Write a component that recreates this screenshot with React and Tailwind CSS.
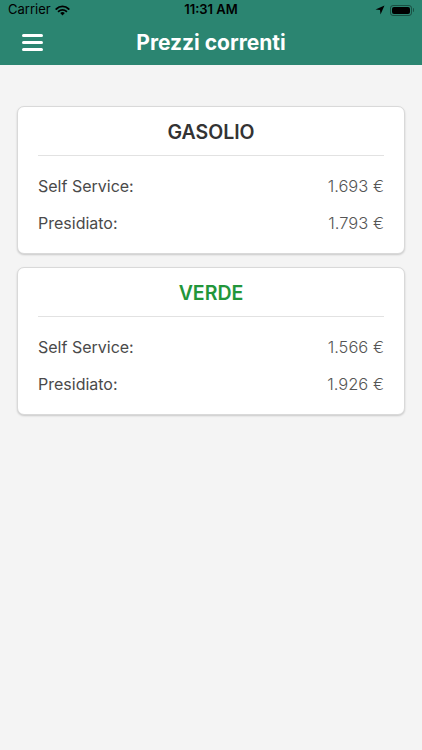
import React from "react";

const fuels = [
  { name: "GASOLIO", color: "text-[#333333]", self: "1.693 €", staff: "1.793 €" },
  { name: "VERDE", color: "text-[#22963a]", self: "1.566 €", staff: "1.926 €" },
];

function StatusBar() {
  return (
    <div className="relative flex h-5 items-center px-2 text-[13px] text-black">
      <div className="flex items-center gap-1">
        <span>Carrier</span>
        <svg width="15" height="11" viewBox="0 0 15 11">
          <path d="M7.5 10.5 L5.2 8 A3.3 3.3 0 0 1 9.8 8 Z" fill="#000" />
          <path d="M3.6 6.4 A5.6 5.6 0 0 1 11.4 6.4" stroke="#000" strokeWidth="1.8" fill="none" strokeLinecap="round" />
          <path d="M1.3 4 A8.8 8.8 0 0 1 13.7 4" stroke="#000" strokeWidth="1.8" fill="none" strokeLinecap="round" />
        </svg>
      </div>
      <span className="absolute left-1/2 -translate-x-1/2 font-semibold">11:31 AM</span>
      <div className="ml-auto flex items-center gap-[5px]">
        <svg width="10" height="10" viewBox="0 0 10 10">
          <path d="M9.5 0.5 L0.5 4.5 L5 5 L5.5 9.5 Z" fill="#000" />
        </svg>
        <div className="flex items-center">
          <div className="h-[11px] w-[22px] rounded-[3px] border border-black/40 p-[1px]">
            <div className="h-full w-full rounded-[2px] bg-black" />
          </div>
          <div className="ml-[1px] h-[4px] w-[1.5px] rounded-r bg-black/40" />
        </div>
      </div>
    </div>
  );
}

function PriceCard({ fuel }) {
  return (
    <div className="mx-[17px] rounded-[7px] border border-[#d9d9d9] bg-white px-5 pb-[18px] pt-[13px] shadow-[0_1px_2px_rgba(0,0,0,0.18)]">
      <h2 className={`text-center text-[19.5px] font-semibold leading-6 ${fuel.color}`}>{fuel.name}</h2>
      <div className="mt-[11px] h-px bg-[#e2e2e2]" />
      <div className="mt-[18px] flex items-center justify-between text-[16px] leading-6">
        <span className="text-[#4a4a4a]">Self Service:</span>
        <span className="text-[16.5px] font-light text-[#555555]">{fuel.self}</span>
      </div>
      <div className="mt-[13px] flex items-center justify-between text-[16px] leading-6">
        <span className="text-[#4a4a4a]">Presidiato:</span>
        <span className="text-[16.5px] font-light text-[#555555]">{fuel.staff}</span>
      </div>
    </div>
  );
}

export default function App() {
  return (
    <div className="min-h-[750px] bg-[#f4f4f4] font-['Inter','Liberation_Sans',sans-serif]">
      <header className="bg-[#2b8571]">
        <StatusBar />
        <div className="relative flex h-[45px] items-center px-[22px]">
          <div className="flex flex-col gap-[4px]">
            <span className="block h-[3px] w-[21px] rounded-full bg-white" />
            <span className="block h-[3px] w-[21px] rounded-full bg-white" />
            <span className="block h-[3px] w-[21px] rounded-full bg-white" />
          </div>
          <h1 className="absolute left-1/2 -translate-x-1/2 text-[21px] font-bold text-white">Prezzi correnti</h1>
        </div>
      </header>
      <main className="flex flex-col gap-[13px] pt-[41px]">
        {fuels.map((f) => (
          <PriceCard key={f.name} fuel={f} />
        ))}
      </main>
    </div>
  );
}
